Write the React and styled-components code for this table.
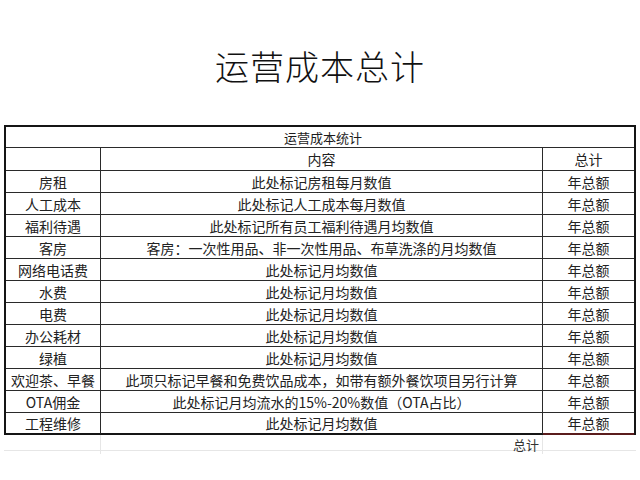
import styled, {createGlobalStyle} from 'styled-components'

const GlobalStyle = createGlobalStyle`
  html, body {
    margin: 0;
    padding: 0;
    background: #fff;
  }
  body {
    font-family: "Noto Sans CJK SC", "Noto Sans", sans-serif;
    color: #1c1c1c;
  }
`

const rows = [
    ['房租', '此处标记房租每月数值'],
    ['人工成本', '此处标记人工成本每月数值'],
    ['福利待遇', '此处标记所有员工福利待遇月均数值'],
    ['客房', '客房：一次性用品、非一次性用品、布草洗涤的月均数值'],
    ['网络电话费', '此处标记月均数值'],
    ['水费', '此处标记月均数值'],
    ['电费', '此处标记月均数值'],
    ['办公耗材', '此处标记月均数值'],
    ['绿植', '此处标记月均数值'],
    ['欢迎茶、早餐', '此项只标记早餐和免费饮品成本，如带有额外餐饮项目另行计算'],
    ['OTA佣金', '此处标记月均流水的15%-20%数值（OTA占比）'],
    ['工程维修', '此处标记月均数值'],
]

export default function App() {
    return (
        <>
            <GlobalStyle/>
            <Page>
                <Title>运营成本总计</Title>
                <Sheet>
                    <TitleRow>运营成本统计</TitleRow>
                    <Row height={23}>
                        <Cell/>
                        <Cell>内容</Cell>
                        <Cell last>总计</Cell>
                    </Row>
                    {rows.map(([name, text], i) => {
                        const isLast = i === rows.length - 1
                        return (
                            <Row key={name} height={22} bottom={!isLast}>
                                <Cell foot={isLast}>{name}</Cell>
                                <Cell foot={isLast}>{text}</Cell>
                                <Cell last foot={isLast} smear={isLast}>年总额</Cell>
                            </Row>
                        )
                    })}
                </Sheet>
                <Footer>
                    <GhostCell/>
                    <GhostCell align="right">总计</GhostCell>
                    <GhostCell last/>
                </Footer>
            </Page>
        </>
    )
}

const Page = styled.div`
  width: 640px;
  height: 480px;
  overflow: hidden;
  padding-top: 47px;
  box-sizing: border-box;
`

const Title = styled.h1`
  margin: 0 0 40px;
  text-align: center;
  font-size: 34px;
  line-height: 38px;
  font-weight: 300;
  letter-spacing: 1px;
  color: #111;
`

const Sheet = styled.div`
  margin-left: 4px;
  width: 632px;
  box-sizing: border-box;
  border: 2px solid #151515;
  border-bottom: none;
`

const TitleRow = styled.div`
  height: 20px;
  border-bottom: 1px solid #2a2a2a;
  display: flex;
  align-items: center;
  justify-content: center;
  font-size: 13px;
  padding-left: 6px;
`

const Row = styled.div`
  display: grid;
  grid-template-columns: 95px 442px 91px;
  height: ${({height}) => height}px;
  box-sizing: border-box;
  border-bottom: ${({bottom}) => bottom === false ? 'none' : '1px solid #2a2a2a'};
`

const Cell = styled.div`
  display: flex;
  align-items: center;
  justify-content: center;
  font-size: 14px;
  white-space: nowrap;
  box-sizing: border-box;
  color: #222;
  border-right: ${({last}) => last ? 'none' : '1px solid #2a2a2a'};
  border-bottom: ${({foot, smear}) => foot ? `2px solid ${smear ? '#5a1c1c' : '#151515'}` : 'none'};
`

const Footer = styled.div`
  margin-left: 4px;
  width: 632px;
  display: grid;
  grid-template-columns: 97px 442px 93px;
  height: 15px;
  border-bottom: 1px solid #e6e6e6;
`

const GhostCell = styled.div`
  display: flex;
  align-items: center;
  justify-content: ${({align}) => align === 'right' ? 'flex-end' : 'center'};
  padding-right: ${({align}) => align === 'right' ? '3px' : '0'};
  font-size: 13px;
  color: #333;
  border-right: ${({last}) => last ? 'none' : '1px solid #e6e6e6'};
`
